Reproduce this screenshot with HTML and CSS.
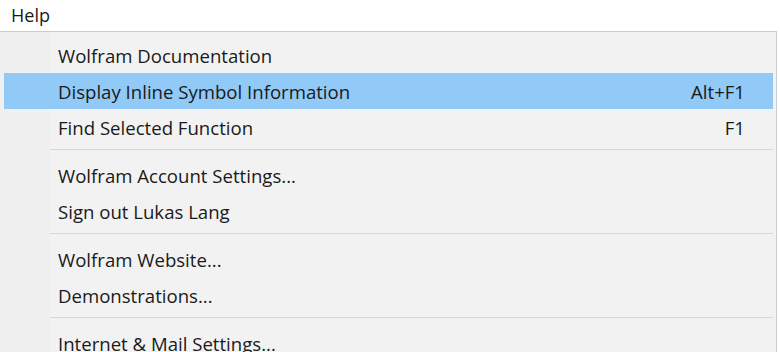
FILE: index.html
```html
<!DOCTYPE html>
<html lang="en">
<head>
    <meta charset="UTF-8">
    <title>Help menu</title>
    <link rel="stylesheet" href="styles.css">
</head>
<body>
    <div class="menubar">
        <span class="menubar-item">Help</span>
    </div>

    <div class="menu">
        <div class="item">
            <span class="label">Wolfram Documentation</span>
        </div>
        <div class="item active">
            <span class="label">Display Inline Symbol Information</span>
            <span class="shortcut">Alt+F1</span>
        </div>
        <div class="item">
            <span class="label">Find Selected Function</span>
            <span class="shortcut">F1</span>
        </div>
        <div class="separator"></div>
        <div class="item">
            <span class="label">Wolfram Account Settings...</span>
        </div>
        <div class="item">
            <span class="label">Sign out Lukas Lang</span>
        </div>
        <div class="separator"></div>
        <div class="item">
            <span class="label">Wolfram Website...</span>
        </div>
        <div class="item">
            <span class="label">Demonstrations...</span>
        </div>
        <div class="separator"></div>
        <div class="item">
            <span class="label">Internet &amp; Mail Settings...</span>
        </div>
    </div>
</body>
</html>
```

FILE: styles.css
```css
body {
    margin: 0;
    font-family: "Open Sans", "Noto Sans", sans-serif;
    background: #fff;
    color: #1a1a1a;
    overflow: hidden;
}
.menubar {
    height: 31px;
    background: #fff;
    display: flex;
    align-items: center;
}
.menubar-item {
    padding-left: 11px;
    font-size: 18px;
    line-height: 31px;
}
.menu {
    width: 776px;
    height: 400px;
    border-top: 1px solid #cccccc;
    border-right: 1px solid #cccccc;
    padding-top: 5px;
    background: linear-gradient(to right, #f0f0f0 50px, #f2f2f2 50px);
}
.item {
    height: 36px;
    margin: 0 3px 0 4px;
    padding: 0 28px 0 54px;
    display: flex;
    align-items: center;
    justify-content: space-between;
    font-size: 18.6px;
}
.item.active {
    background: #91c9f7;
}
.separator {
    height: 12px;
    margin-left: 50px;
    margin-right: 3px;
    box-sizing: border-box;
    padding-top: 4px;
}
.separator::before {
    content: "";
    display: block;
    height: 1px;
    background: #d7d7d7;
}
```
